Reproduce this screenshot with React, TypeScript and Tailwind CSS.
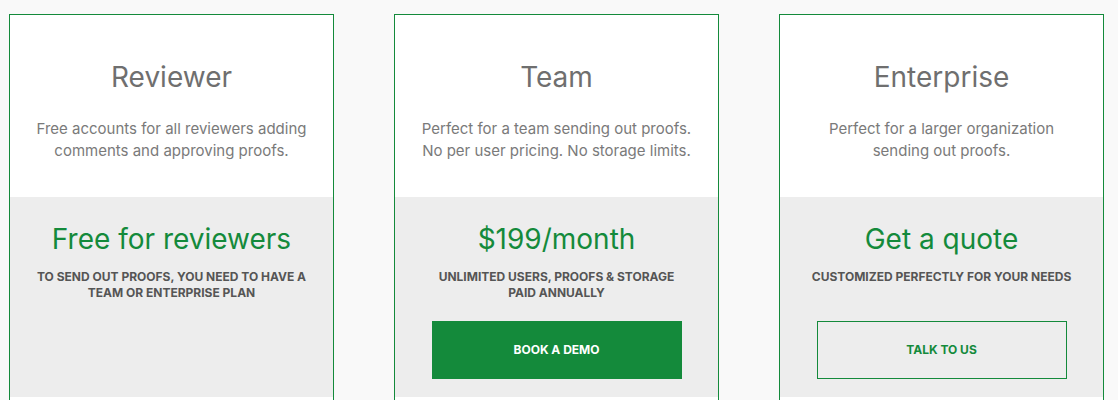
import React from 'react'

// ──────────────────────────────────────────────────────────────
// Pricing plans — three cards with an upper intro and a grey price block
// ──────────────────────────────────────────────────────────────

interface Plan {
  name: string
  blurb: string[]
  price: string
  note: string[]
  cta?: { label: string; solid: boolean }
}

const plans: Plan[] = [
  {
    name: 'Reviewer',
    blurb: ['Free accounts for all reviewers adding', 'comments and approving proofs.'],
    price: 'Free for reviewers',
    note: ['To send out proofs, you need to have a', 'team or enterprise plan'],
  },
  {
    name: 'Team',
    blurb: ['Perfect for a team sending out proofs.', 'No per user pricing. No storage limits.'],
    price: '$199/month',
    note: ['Unlimited users, proofs & storage', 'paid annually'],
    cta: { label: 'Book a demo', solid: true },
  },
  {
    name: 'Enterprise',
    blurb: ['Perfect for a larger organization', 'sending out proofs.'],
    price: 'Get a quote',
    note: ['Customized perfectly for your needs'],
    cta: { label: 'Talk to us', solid: false },
  },
]

function PlanCard({ plan }: { plan: Plan }) {
  return (
    <div className="flex w-[325px] shrink-0 flex-col self-start border border-[#148a3b] bg-white">
      {/* Intro */}
      <div className="flex h-[182px] shrink-0 flex-col items-center pt-[46px] text-center">
        <h2 className="text-[28px] leading-[32px] font-normal text-[#6f6f6f]">{plan.name}</h2>
        <p className="mt-[25px] text-[15px] leading-[22px] text-[#7a7a7a]">
          {plan.blurb.map((l) => (
            <span key={l} className="block">
              {l}
            </span>
          ))}
        </p>
      </div>

      {/* Price block */}
      <div className="flex h-[200px] shrink-0 flex-col items-center bg-[#ededed] pt-[24px] text-center">
        <div className="text-[28px] leading-[36px] text-[#148a3b]">{plan.price}</div>
        <p className="mt-[12px] text-[12px] leading-[16px] font-bold text-[#555555] uppercase">
          {plan.note.map((l) => (
            <span key={l} className="block">
              {l}
            </span>
          ))}
        </p>
        {plan.cta && (
          <button
            className={[
              'h-[58px] w-[250px] shrink-0 text-[12px] font-bold uppercase',
              plan.note.length === 1 ? 'mt-[36px]' : 'mt-[20px]',
              plan.cta.solid
                ? 'bg-[#148a3b] text-white'
                : 'border border-[#148a3b] bg-transparent text-[#148a3b]',
            ].join(' ')}
          >
            {plan.cta.label}
          </button>
        )}
      </div>

      <div className="h-[10px] shrink-0 bg-white" />
    </div>
  )
}

export default function App() {
  return (
    <div
      className="flex h-[400px] w-[1118px] gap-[60px] overflow-hidden bg-[#f9f9f9] pt-[14px] pl-[9px]"
      style={{ fontFamily: 'Inter, "Open Sans", sans-serif' }}
    >
      {plans.map((p) => (
        <PlanCard key={p.name} plan={p} />
      ))}
    </div>
  )
}
